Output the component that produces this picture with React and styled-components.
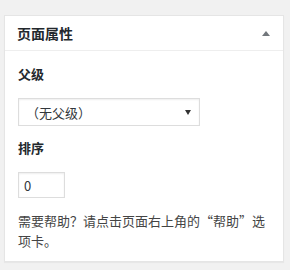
import React from 'react'
import styled, { createGlobalStyle } from 'styled-components'

const GlobalStyle = createGlobalStyle`
  body {
    margin: 0;
    background: #f1f1f1;
    font-family: "Noto Sans CJK SC", "Liberation Sans", sans-serif;
    color: #444;
  }
`;

const Page = styled.div`
  padding: 15px 0 0 4px;
  height: 255px;
`;

const PostBox = styled.div`
  width: 278px;
  height: 245px;
  background: #fff;
  border: 1px solid #e5e5e5;
  box-shadow: 0 1px 1px rgba(0, 0, 0, 0.04);
`;

const BoxHeader = styled.div`
  display: flex;
  align-items: center;
  justify-content: space-between;
  height: 34px;
  padding: 0 13px 0 12px;
  border-bottom: 1px solid #eee;
`;

const Title = styled.h2`
  margin: 0;
  font-size: 14px;
  font-weight: 700;
  color: #23282d;
`;

const Toggle = styled.span`
  width: 0;
  height: 0;
  border-left: 4px solid transparent;
  border-right: 4px solid transparent;
  border-bottom: 5px solid #72777c;
`;

const Inside = styled.div`
  padding: 0 12px 0 13px;
  font-size: 13px;
`;

const Label = styled.p`
  margin: ${p => p.$top}px 0 ${p => p.$bottom}px;
  font-weight: 700;
  color: #23282d;
  line-height: 20px;
`;

const SelectBox = styled.div`
  display: flex;
  align-items: center;
  justify-content: space-between;
  width: 182px;
  height: 28px;
  padding: 0 8px 0 7px;
  box-sizing: border-box;
  border: 1px solid #ddd;
  box-shadow: inset 0 1px 2px rgba(0, 0, 0, 0.07);
  color: #32373c;
`;

const Arrow = styled.span`
  width: 0;
  height: 0;
  border-left: 3px solid transparent;
  border-right: 3px solid transparent;
  border-top: 5px solid #333;
`;

const OrderInput = styled.div`
  width: 47px;
  height: 26px;
  box-sizing: border-box;
  padding: 0 5px;
  display: flex;
  align-items: center;
  border: 1px solid #ddd;
  box-shadow: inset 0 1px 2px rgba(0, 0, 0, 0.07);
  color: #32373c;
`;

const Help = styled.p`
  margin: 13px 0 0;
  line-height: 20px;
  color: #444;
  width: 254px;
`;

export default function App() {
  return (
    <>
      <GlobalStyle />
      <Page>
        <PostBox>
          <BoxHeader>
            <Title>页面属性</Title>
            <Toggle />
          </BoxHeader>
          <Inside>
            <Label $top={13} $bottom={14}>父级</Label>
            <SelectBox>
              <span>（无父级）</span>
              <Arrow />
            </SelectBox>
            <Label $top={12} $bottom={14}>排序</Label>
            <OrderInput>0</OrderInput>
            <Help>需要帮助？请点击页面右上角的“帮助”选项卡。</Help>
          </Inside>
        </PostBox>
      </Page>
    </>
  );
}
